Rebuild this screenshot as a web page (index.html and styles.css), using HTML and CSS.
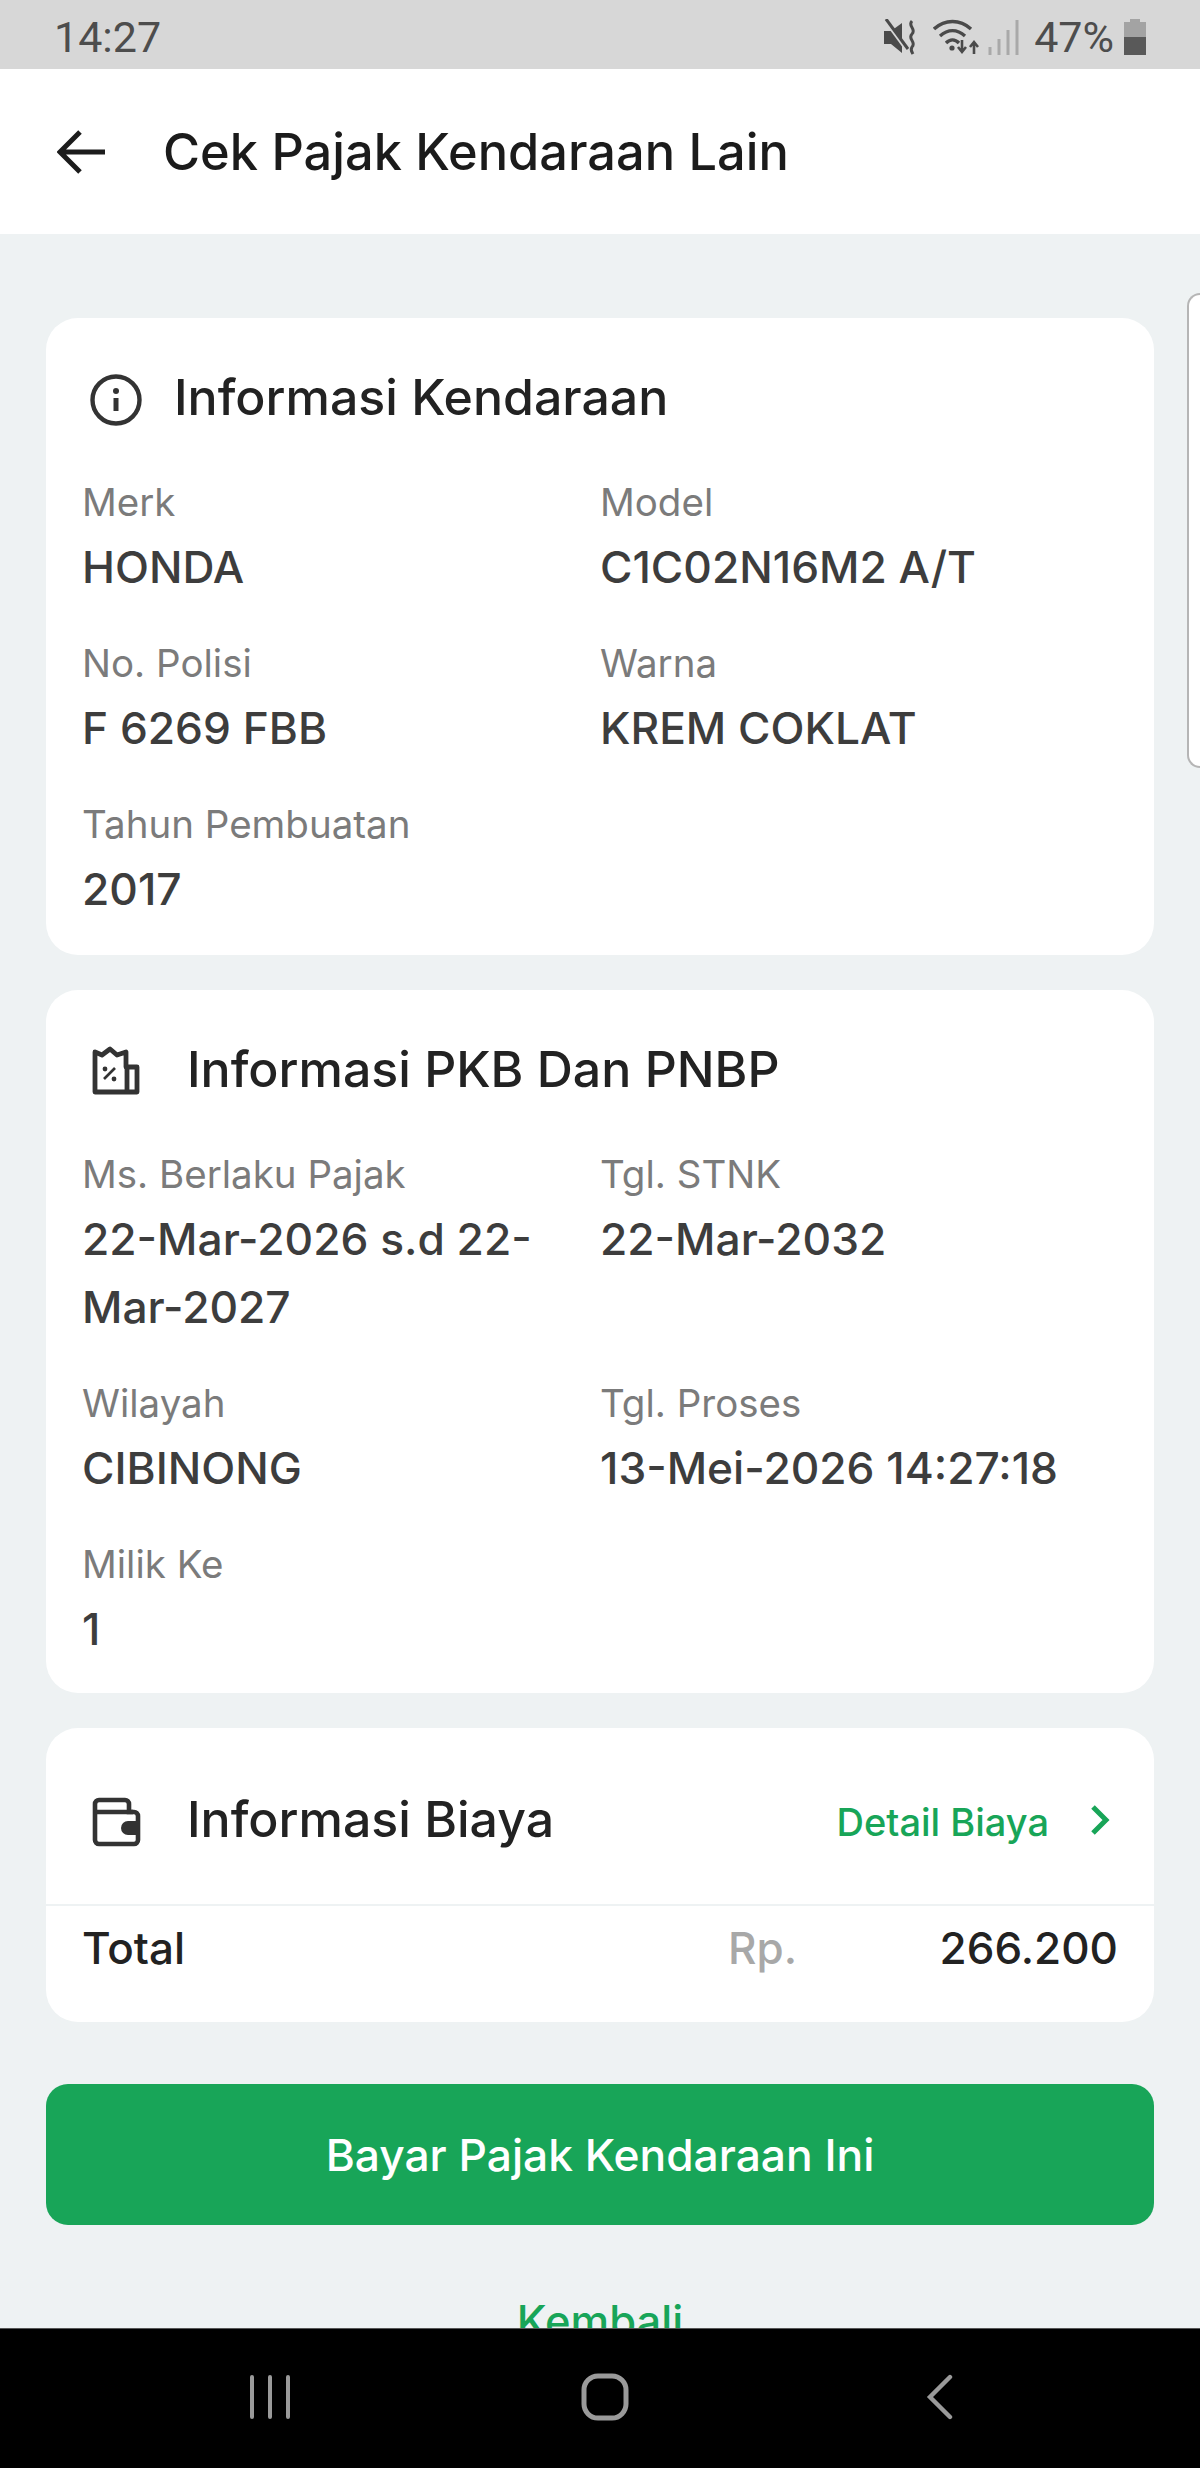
FILE: index.html
```html
<!DOCTYPE html>
<html>
  <head>
    <title>Cek Pajak Kendaraan Lain</title>
    <link rel="stylesheet" href="styles.css">
  </head>
  <body>
    <div class="status-bar">
      <span class="status-time">14:27</span>
      <div class="status-right">
        <svg class="ic-mute" width="36" height="36" viewBox="0 0 36 36">
          <path d="M0 12h7l11-8v30L7 25H0z" fill="#4a4a4a"/>
          <path d="M2 3l22 30" stroke="#d7d7d7" stroke-width="3"/>
          <path d="M2 0l22 30" stroke="#4a4a4a" stroke-width="3"/>
          <path d="M28 2c-5 5 5 8 0 13s5 8 0 13c-2 3 0 5 1 7" fill="none" stroke="#4a4a4a" stroke-width="3"/>
        </svg>
        <svg class="ic-wifi" width="46" height="36" viewBox="0 0 46 36">
          <path d="M1 10C12 0 27 0 38 10M7 17c8-7 17-7 25 0M13 24c4-4 9-4 13 0" fill="none" stroke="#4a4a4a" stroke-width="3.4"/>
          <circle cx="19" cy="29" r="2.6" fill="#4a4a4a"/>
          <path d="M29 21v10M25 28l4 5 4-5M41 35V24M37 28l4-5 4 5" fill="none" stroke="#4a4a4a" stroke-width="2.6"/>
        </svg>
        <svg class="ic-signal" width="31" height="35" viewBox="0 0 31 35">
          <path d="M2 35v-8M11 35V19M20 35V10M29 35V0" stroke="#a9a9a9" stroke-width="3"/>
        </svg>
        <span class="status-batt-text">47%</span>
        <svg class="ic-batt" width="24" height="36" viewBox="0 0 24 36">
          <path d="M7 0h10v3h6v15H1V3h6z" fill="#a3a3a3"/>
          <path d="M1 18h22v18H1z" fill="#595959"/>
        </svg>
      </div>
    </div>

    <div class="app-header">
      <svg class="ic-back" width="50" height="44" viewBox="0 0 50 44">
        <path d="M48 22H4M23 2L3 22l20 20" fill="none" stroke="#1c1c1c" stroke-width="5"/>
      </svg>
      <h1>Cek Pajak Kendaraan Lain</h1>
    </div>

    <div class="content">
      <div class="card card-first">
        <div class="card-head">
          <svg class="card-icon icon-info" width="52" height="52" viewBox="0 0 52 52">
            <circle cx="26" cy="26" r="23.5" fill="none" stroke="#333" stroke-width="4.4"/>
            <circle cx="26" cy="17" r="3" fill="#333"/>
            <path d="M26 24v13" stroke="#333" stroke-width="5"/>
          </svg>
          <h2>Informasi Kendaraan</h2>
        </div>
        <div class="info-grid">
          <div class="info-item"><p class="lbl">Merk</p><p class="val">HONDA</p></div>
          <div class="info-item"><p class="lbl">Model</p><p class="val">C1C02N16M2 A/T</p></div>
          <div class="info-item"><p class="lbl">No. Polisi</p><p class="val">F 6269 FBB</p></div>
          <div class="info-item"><p class="lbl">Warna</p><p class="val">KREM COKLAT</p></div>
          <div class="info-item"><p class="lbl">Tahun Pembuatan</p><p class="val">2017</p></div>
        </div>
      </div>

      <div class="card">
        <div class="card-head">
          <svg class="card-icon icon-pkb" width="52" height="52" viewBox="0 0 52 52">
            <path d="M5 6l7 3 8-6 7 6 9-3v15h11v25H5z" fill="none" stroke="#333" stroke-width="4.8" stroke-linejoin="round"/>
            <path d="M37 21v26" stroke="#333" stroke-width="4.8"/>
            <path d="M14 33l11-11" stroke="#333" stroke-width="2.6"/>
            <circle cx="15" cy="23" r="2.4" fill="#333"/>
            <circle cx="24" cy="33" r="2.4" fill="#333"/>
          </svg>
          <h2>Informasi PKB Dan PNBP</h2>
        </div>
        <div class="info-grid">
          <div class="info-item"><p class="lbl">Ms. Berlaku Pajak</p><p class="val">22-Mar-2026 s.d 22-Mar-2027</p></div>
          <div class="info-item"><p class="lbl">Tgl. STNK</p><p class="val">22-Mar-2032</p></div>
          <div class="info-item"><p class="lbl">Wilayah</p><p class="val">CIBINONG</p></div>
          <div class="info-item"><p class="lbl">Tgl. Proses</p><p class="val">13-Mei-2026 14:27:18</p></div>
          <div class="info-item"><p class="lbl">Milik Ke</p><p class="val">1</p></div>
        </div>
      </div>

      <div class="card card-biaya">
        <div class="card-head biaya-head">
          <svg class="card-icon icon-wallet" width="52" height="52" viewBox="0 0 52 52">
            <path d="M9 4h26a4 4 0 0 1 4 4v8h5a4 4 0 0 1 4 4v24a4 4 0 0 1-4 4H9a4 4 0 0 1-4-4V8a4 4 0 0 1 4-4z" fill="none" stroke="#333" stroke-width="4.6"/>
            <path d="M5 16h38" stroke="#333" stroke-width="4.6"/>
            <path d="M48 25H38a7 7 0 0 0 0 14h10z" fill="#333"/>
          </svg>
          <h2>Informasi Biaya</h2>
          <a class="detail-link">Detail Biaya</a>
          <svg class="ic-chevron" width="24" height="34" viewBox="0 0 24 34">
            <path d="M5 4l13 13L5 30" fill="none" stroke="#18a558" stroke-width="5"/>
          </svg>
        </div>
        <div class="total-row">
          <span class="total-lbl">Total</span>
          <span class="total-cur">Rp.</span>
          <span class="total-val">266.200</span>
        </div>
      </div>

      <button class="btn-bayar">Bayar Pajak Kendaraan Ini</button>
      <div class="kembali">Kembali</div>

      <div class="edge-handle"></div>
    </div>

    <div class="nav-bar">
      <svg width="44" height="44" viewBox="0 0 44 44">
        <path d="M4 2v40M22 2v40M40 2v40" stroke="#9a9a9a" stroke-width="4" stroke-linecap="round"/>
      </svg>
      <svg width="48" height="48" viewBox="0 0 48 48">
        <rect x="3" y="3" width="42" height="42" rx="14" fill="none" stroke="#9a9a9a" stroke-width="5"/>
      </svg>
      <svg width="30" height="46" viewBox="0 0 30 46">
        <path d="M25 3L5 23l20 20" fill="none" stroke="#9a9a9a" stroke-width="4.4" stroke-linecap="round"/>
      </svg>
    </div>
  </body>
</html>
```

FILE: styles.css
```css
body {
  margin: 0;
  width: 1200px;
  height: 2468px;
  overflow: hidden;
  font-family: Inter, "Liberation Sans", sans-serif;
  background-color: #eef2f3;
  color: #1f1f1f;
}

p, h1, h2 {
  margin: 0;
}

.status-bar {
  height: 69px;
  background-color: #d7d7d7;
  display: flex;
  align-items: center;
  justify-content: space-between;
  padding: 5px 53px 0 54px;
  box-sizing: border-box;
  color: #4d4d4d;
  font-family: Roboto, sans-serif;
  font-size: 43px;
}

.status-right {
  display: flex;
  align-items: center;
}

.ic-mute { margin-right: 13px; }
.ic-wifi { margin-right: 9px; }
.ic-signal { margin-right: 15px; }
.ic-batt { margin-left: 9px; }

.app-header {
  height: 165px;
  background-color: #fff;
  display: flex;
  align-items: center;
  padding-left: 57px;
}

.ic-back {
  margin-right: 56px;
}

h1 {
  font-size: 50.5px;
  font-weight: 550;
  color: #1b1b1b;
}

.content {
  position: relative;
  height: 2094px;
  overflow: hidden;
  padding: 84px 46px 0;
  box-sizing: border-box;
}

.card {
  background-color: #fff;
  border-radius: 32px;
  padding: 46px 36px 0;
  margin-bottom: 35px;
  height: 703px;
  box-sizing: border-box;
}

.card-first {
  height: 637px;
}

.card-head {
  display: flex;
  align-items: center;
  height: 66px;
}

.card-icon {
  margin-left: 8px;
}

.icon-info {
  margin-top: 6px;
  margin-right: 32px;
}

.icon-pkb {
  margin-top: 5px;
  margin-right: 45px;
}

.icon-wallet {
  margin-top: 6px;
  margin-right: 45px;
}

h2 {
  font-size: 50px;
  font-weight: 550;
  color: #222;
}

.info-grid {
  display: grid;
  grid-template-columns: 518px 518px;
  row-gap: 36px;
  margin-top: 46px;
}

.lbl {
  font-size: 38.5px;
  line-height: 52px;
  color: #7b7b7b;
}

.val {
  font-size: 44.3px;
  line-height: 68px;
  font-weight: 550;
  color: #3d3d3d;
  margin-top: 5px;
}

.card-biaya {
  height: 294px;
  padding: 0;
}

.biaya-head {
  height: 178px;
  padding: 6px 36px 0;
  box-sizing: border-box;
  border-bottom: 2px solid #eef2f3;
}

.detail-link {
  margin-left: auto;
  margin-right: 39px;
  margin-top: 5px;
  font-size: 38px;
  font-weight: 500;
  color: #18a558;
}

.ic-chevron {
  margin-right: 6px;
  margin-top: 1px;
}

.total-row {
  display: flex;
  align-items: center;
  padding: 0 36px;
  height: 84px;
  font-size: 44px;
  font-weight: 550;
}

.total-lbl { color: #222; }
.total-cur { margin-left: auto; color: #a8a8a8; }
.total-val { width: 321px; text-align: right; color: #222; }

.btn-bayar {
  display: block;
  width: 100%;
  height: 141px;
  margin-top: 62px;
  border: none;
  border-radius: 22px;
  background-color: #18a558;
  color: #fff;
  font-family: inherit;
  font-size: 44.3px;
  font-weight: 500;
}

.kembali {
  text-align: center;
  margin-top: 70px;
  font-size: 43.5px;
  font-weight: 500;
  color: #18a558;
}

/* samsung edge panel tab */
.edge-handle {
  position: absolute;
  right: 0;
  top: 59px;
  width: 13px;
  height: 475px;
  border: 2px solid #b5b5b5;
  border-right: none;
  border-radius: 14px 0 0 14px;
  background-color: #fff;
  box-sizing: border-box;
}

.nav-bar {
  height: 140px;
  background-color: #000;
  border-top: 1px solid #555;
  box-sizing: border-box;
  display: flex;
  align-items: center;
  padding: 0 0 4px 0;
}

.nav-bar svg:nth-child(1) { margin-left: 248px; }
.nav-bar svg:nth-child(2) { margin-left: 289px; }
.nav-bar svg:nth-child(3) { margin-left: 296px; }
```
